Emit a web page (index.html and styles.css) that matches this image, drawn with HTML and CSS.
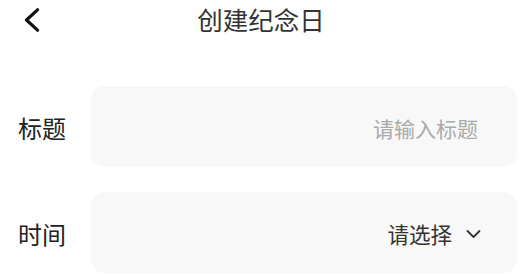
FILE: index.html
```html
<!DOCTYPE html>
<html lang="zh-CN">
<head>
<meta charset="utf-8">
<title>创建纪念日</title>
<link rel="stylesheet" href="styles.css">
</head>
<body>
<header class="nav">
  <button class="back" aria-label="返回">
    <svg width="16" height="24" viewBox="0 0 16 24"><polyline points="13.5,1.8 2.5,12 13.5,22.2" fill="none" stroke="#111" stroke-width="3.2" stroke-linecap="round" stroke-linejoin="round"/></svg>
  </button>
  <h1 class="title">创建纪念日</h1>
</header>
<main class="form">
  <div class="row">
    <label class="label">标题</label>
    <div class="field">
      <span class="placeholder">请输入标题</span>
    </div>
  </div>
  <div class="row">
    <label class="label">时间</label>
    <div class="field">
      <span class="value">请选择</span>
      <svg class="arrow" width="15" height="10" viewBox="0 0 15 10"><polyline points="1.5,2 7.5,8 13.5,2" fill="none" stroke="#333" stroke-width="1.8" stroke-linecap="round" stroke-linejoin="round"/></svg>
    </div>
  </div>
</main>
</body>
</html>
```
FILE: styles.css
```css
* { box-sizing: border-box; }
html, body { margin: 0; padding: 0; background: #fff; }
body {
  width: 532px;
  height: 274px;
  overflow: hidden;
  font-family: "Noto Sans CJK SC", "Noto Sans", sans-serif;
  color: #333;
}
.nav {
  position: relative;
  height: 42px;
  display: flex;
  align-items: flex-start;
  justify-content: center;
  padding: 0 18px 0 8px;
}
.back {
  position: absolute;
  left: 24px;
  top: 8px;
  padding: 0;
  border: 0;
  background: none;
  width: 16px;
  height: 24px;
  display: block;
}
.back svg { display: block; }
.title {
  margin: 0;
  font-size: 25.5px;
  font-weight: 400;
  line-height: 38px;
  color: #333;
}
.form {
  padding-top: 44px;
  display: flex;
  flex-direction: column;
  gap: 25px;
}
.row {
  display: flex;
  align-items: center;
  padding-right: 15px;
}
.label {
  width: 91px;
  padding-left: 18px;
  font-size: 24px;
  line-height: 30px;
  color: #222;
  padding-top: 3px;
}
.field {
  flex: 1;
  height: 81px;
  background: #f8f8f8;
  border-radius: 14px;
  display: flex;
  align-items: center;
  justify-content: flex-end;
  padding-right: 39px;
}
.placeholder {
  font-size: 21px;
  color: #aaa;
  padding-top: 2px;
}
.value {
  font-size: 21.5px;
  color: #333;
  padding-top: 2px;
  margin-right: 14px;
}
.field .arrow { display: block; margin-right: -3px; margin-top: 2px; }
```
